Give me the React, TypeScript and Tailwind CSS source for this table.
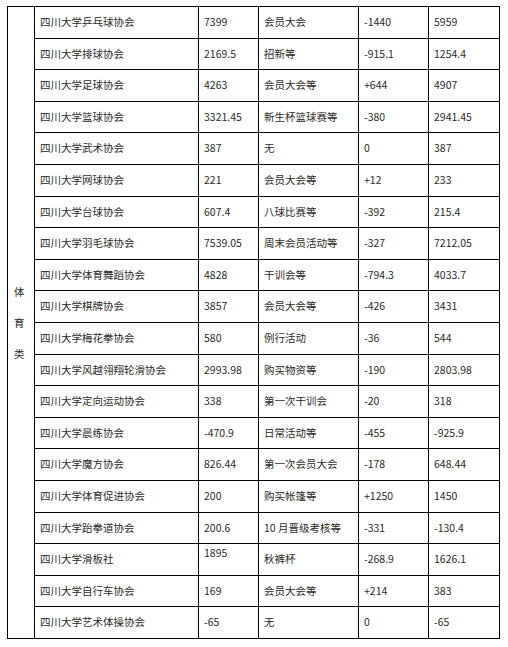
import React from "react";

const rows: [string, string, string, string, string][] = [
  ["四川大学乒乓球协会", "7399", "会员大会", "-1440", "5959"],
  ["四川大学排球协会", "2169.5", "招新等", "-915.1", "1254.4"],
  ["四川大学足球协会", "4263", "会员大会等", "+644", "4907"],
  ["四川大学篮球协会", "3321.45", "新生杯篮球赛等", "-380", "2941.45"],
  ["四川大学武术协会", "387", "无", "0", "387"],
  ["四川大学网球协会", "221", "会员大会等", "+12", "233"],
  ["四川大学台球协会", "607.4", "八球比赛等", "-392", "215.4"],
  ["四川大学羽毛球协会", "7539.05", "周末会员活动等", "-327", "7212.05"],
  ["四川大学体育舞蹈协会", "4828", "干训会等", "-794.3", "4033.7"],
  ["四川大学棋牌协会", "3857", "会员大会等", "-426", "3431"],
  ["四川大学梅花拳协会", "580", "例行活动", "-36", "544"],
  ["四川大学风越翎翔轮滑协会", "2993.98", "购买物资等", "-190", "2803.98"],
  ["四川大学定向运动协会", "338", "第一次干训会", "-20", "318"],
  ["四川大学晨练协会", "-470.9", "日常活动等", "-455", "-925.9"],
  ["四川大学魔方协会", "826.44", "第一次会员大会", "-178", "648.44"],
  ["四川大学体育促进协会", "200", "购买帐篷等", "+1250", "1450"],
  ["四川大学跆拳道协会", "200.6", "10 月晋级考核等", "-331", "-130.4"],
  ["四川大学滑板社", "1895", "秋裤杯", "-268.9", "1626.1"],
  ["四川大学自行车协会", "169", "会员大会等", "+214", "383"],
  ["四川大学艺术体操协会", "-65", "无", "0", "-65"],
];

export default function App() {
  return (
    <div
      className="w-[508px] h-[647px] bg-white pl-[7px] pt-[6px] text-[#2a2a1e] text-[10.5px]"
      style={{ fontFamily: '"Noto Sans CJK SC", "Noto Sans", sans-serif' }}
    >
      <table className="border-collapse table-fixed w-[493px] h-[633px]">
        <colgroup>
          <col className="w-[27px]" />
          <col className="w-[164px]" />
          <col className="w-[60px]" />
          <col className="w-[100px]" />
          <col className="w-[70px]" />
          <col className="w-[71px]" />
        </colgroup>
        <tbody>
          {rows.map((r, i) => (
            <tr key={i} className="h-[31.6px]">
              {i === 0 && (
                <td
                  rowSpan={20}
                  className="border border-black align-middle pl-[6px] p-0"
                >
                  <div className="flex flex-col gap-[16px] leading-[15px]">
                    <span>体</span>
                    <span>育</span>
                    <span>类</span>
                  </div>
                </td>
              )}
              <td className="border border-black pl-[5px] p-0 align-middle leading-none">{r[0]}</td>
              <td
                className={
                  i === 17
                    ? "border border-black pl-[5px] p-0 pt-[4px] align-top leading-none"
                    : "border border-black pl-[5px] p-0 align-middle leading-none"
                }
              >
                {r[1]}
              </td>
              <td className="border border-black pl-[5px] p-0 align-middle leading-none">{r[2]}</td>
              <td className="border border-black pl-[5px] p-0 align-middle leading-none">{r[3]}</td>
              <td className="border border-black pl-[5px] p-0 align-middle leading-none">{r[4]}</td>
            </tr>
          ))}
        </tbody>
      </table>
    </div>
  );
}
